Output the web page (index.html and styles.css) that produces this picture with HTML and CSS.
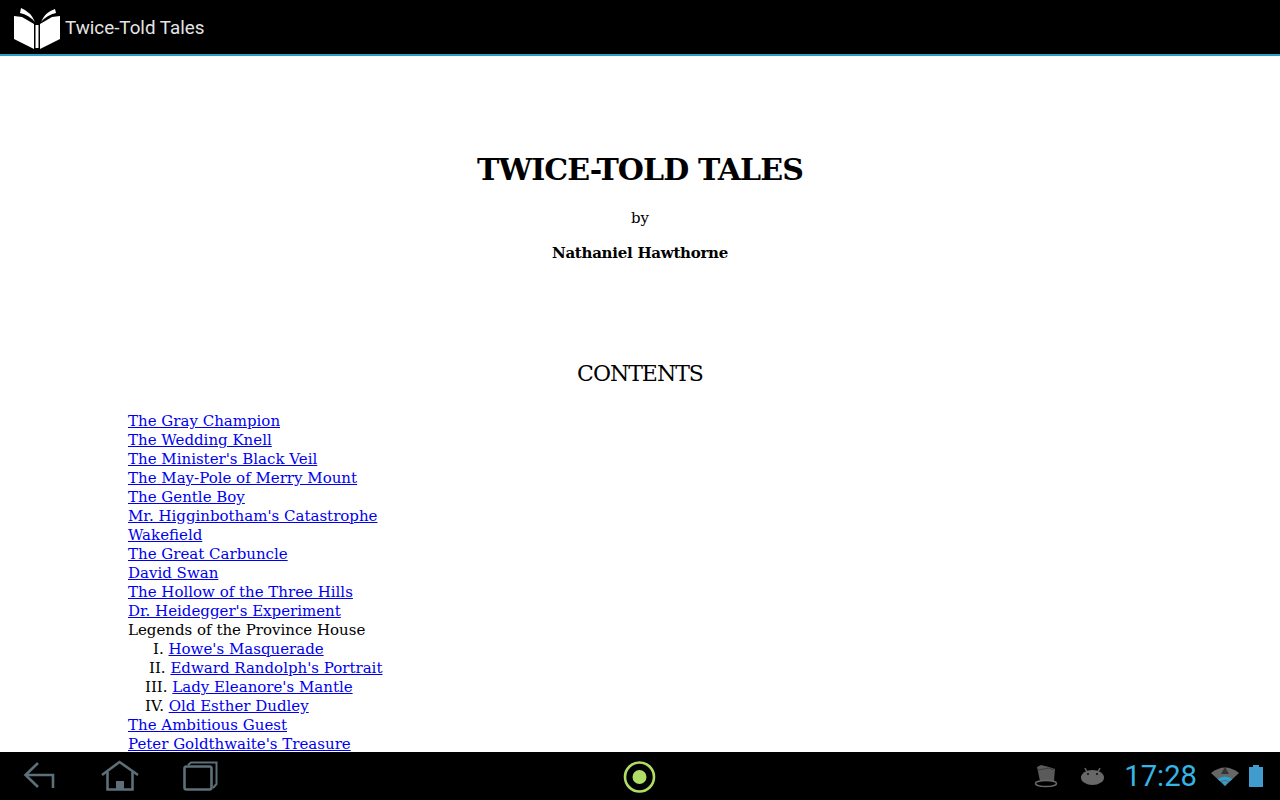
FILE: index.html
```html
<!DOCTYPE html>
<html lang="en">
<head>
    <meta charset="UTF-8">
    <meta name="viewport" content="width=device-width, initial-scale=1.0">
    <title>Twice-Told Tales</title>
    <link rel="stylesheet" href="styles.css">
</head>
<body>

    <div class="action-bar">
        <svg class="book-icon" width="46" height="46" viewBox="0 0 46 46" fill="#fff">
            <path d="M0 12 L8 13 L20 20 L20 45 L0 35 Z"/>
            <path d="M26 20 L38 13 L46 12 L46 35 L26 45 Z"/>
            <path d="M21.5 21 H24.5 V44 H21.5 Z"/>
            <path d="M7 4 Q17 8 21 18 Q15 11 6 9 Z"/>
            <path d="M41 5 Q31 8 27 18 Q33 11 42 9 Z"/>
        </svg>
        <span class="app-title">Twice-Told Tales</span>
    </div>

    <div class="book-page">
        <h1>TWICE-TOLD TALES</h1>
        <p class="by">by</p>
        <p class="author">Nathaniel Hawthorne</p>
        <h2>CONTENTS</h2>
        <div class="toc">
            <div><a href="#">The Gray Champion</a></div>
            <div><a href="#">The Wedding Knell</a></div>
            <div><a href="#">The Minister's Black Veil</a></div>
            <div><a href="#">The May-Pole of Merry Mount</a></div>
            <div><a href="#">The Gentle Boy</a></div>
            <div><a href="#">Mr. Higginbotham's Catastrophe</a></div>
            <div><a href="#">Wakefield</a></div>
            <div><a href="#">The Great Carbuncle</a></div>
            <div><a href="#">David Swan</a></div>
            <div><a href="#">The Hollow of the Three Hills</a></div>
            <div><a href="#">Dr. Heidegger's Experiment</a></div>
            <div>Legends of the Province House</div>
            <div class="sub-1">I. <a href="#">Howe's Masquerade</a></div>
            <div class="sub-2">II. <a href="#">Edward Randolph's Portrait</a></div>
            <div class="sub-3">III. <a href="#">Lady Eleanore's Mantle</a></div>
            <div class="sub-3">IV. <a href="#">Old Esther Dudley</a></div>
            <div><a href="#">The Ambitious Guest</a></div>
            <div><a href="#">Peter Goldthwaite's Treasure</a></div>
        </div>
    </div>

    <div class="nav-bar">
        <div class="nav-left">
            <svg width="34" height="28" viewBox="0 0 34 28" fill="none" stroke="#5d6f78" stroke-width="2.6">
                <path d="M15 1 L2.5 13 L15 25"/>
                <path d="M2.5 13 H30 V26"/>
            </svg>
            <svg width="40" height="32" viewBox="0 0 40 32" fill="none" stroke="#5d6f78" stroke-width="2.6">
                <path d="M2 15 L19.5 2 L38 15"/>
                <path d="M7.5 12 V29.5 H32.5 V12"/>
                <rect x="16" y="21" width="8" height="8" fill="#5d6f78" stroke="none"/>
            </svg>
            <svg width="35" height="30" viewBox="0 0 35 30" fill="none" stroke="#5d6f78" stroke-width="2.6">
                <rect x="1.5" y="5.5" width="27" height="23" rx="2"/>
                <path d="M5 4 L8 1.5 H33.5 V23 L30 27" stroke-width="2"/>
            </svg>
        </div>
        <div class="nav-center">
            <svg width="34" height="36" viewBox="0 0 34 36">
                <circle cx="16.5" cy="19" r="14.5" fill="none" stroke="#b0dd66" stroke-width="2.6"/>
                <circle cx="16.5" cy="19" r="7" fill="#b0dd66"/>
            </svg>
        </div>
        <div class="nav-right">
            <svg class="hat" width="24" height="24" viewBox="0 0 24 24">
                <path fill="#5a5a5a" d="M3 3 L7 1 L15 3 L21 5 L20 17 L6 17 Z"/>
                <path fill="none" stroke="#3c3c3c" d="M4 6 L15 4 L20 6"/>
                <ellipse cx="12" cy="19.5" rx="10.5" ry="3" fill="none" stroke="#6a6a6a" stroke-width="1.5"/>
            </svg>
            <svg class="droid" width="24" height="18" viewBox="0 0 24 18">
                <ellipse cx="11.5" cy="10.5" rx="11.5" ry="7.5" fill="#686868"/>
                <path d="M6 5 L4 1 M17 5 L19 1" stroke="#686868" stroke-width="1.5"/>
                <circle cx="7" cy="7" r="1.1" fill="#111"/>
                <circle cx="16" cy="7" r="1.1" fill="#111"/>
            </svg>
            <span class="clock">17:28</span>
            <svg class="wifi" width="28" height="20" viewBox="0 0 28 20">
                <path fill="#666" d="M0 7 Q14 -4 28 7 L14 20 Z"/>
                <path fill="#333" d="M14 1 L10 8 H18 Z"/>
                <path fill="#2f9fd0" d="M6.5 13 Q14 8 21.5 13 L18.5 15.5 Q14 12.5 9.5 15.5 Z"/>
                <path fill="#2f9fd0" d="M10.5 16 Q14 14 17.5 16 L14 20 Z"/>
            </svg>
            <svg class="battery" width="14" height="22" viewBox="0 0 14 22">
                <rect x="4" y="0" width="6" height="3" fill="#3f9ccc"/>
                <rect x="0" y="2" width="14" height="20" fill="#3f9ccc"/>
            </svg>
        </div>
    </div>

</body>
</html>
```

FILE: styles.css
```css
html, body {
    height: 100%;
}
body {
    margin: 0;
    display: flex;
    flex-direction: column;
    overflow: hidden;
    background: #fff;
    font-family: "DejaVu Serif", serif;
}
.action-bar {
    height: 54px;
    flex: none;
    display: flex;
    align-items: center;
    background: #000;
    border-bottom: 2px solid #2a9cc8;
    padding-left: 14px;
}
.book-icon {
    flex: none;
}
.app-title {
    margin: 2px 0 0 5px;
    font-family: Roboto, sans-serif;
    font-size: 18.8px;
    color: #e4e4e4;
}
.book-page {
    flex: 1;
    min-height: 0;
    overflow: hidden;
    padding: 0 128px;
    color: #000;
    font-size: 15px;
    line-height: 19px;
}
h1 {
    margin: 93px 0 0;
    text-align: center;
    font-size: 30px;
    letter-spacing: -0.9px;
    line-height: 42px;
}
.by {
    margin: 18px 0 0;
    text-align: center;
}
.author {
    margin: 16px 0 0;
    text-align: center;
    font-weight: bold;
    letter-spacing: -0.26px;
}
h2 {
    margin: 95px 0 0;
    text-align: center;
    font-size: 22px;
    letter-spacing: -1px;
    line-height: 32px;
    font-weight: normal;
}
.toc {
    margin-top: 22px;
}
.toc a {
    color: #00e;
}
.sub-1 {
    padding-left: 25px;
}
.sub-2 {
    padding-left: 21px;
}
.sub-3 {
    padding-left: 17px;
}
.nav-bar {
    height: 48px;
    flex: none;
    display: grid;
    grid-template-columns: 1fr auto 1fr;
    align-items: center;
    background: #000;
}
.nav-left {
    display: flex;
    align-items: center;
    gap: 43px;
    padding-left: 23px;
}
.nav-center {
    display: flex;
}
.nav-right {
    display: flex;
    align-items: center;
    justify-content: flex-end;
    padding-right: 17px;
}
.hat {
    margin-right: 23px;
}
.droid {
    margin-right: 19px;
}
.clock {
    margin-right: 14px;
    font-family: Roboto, sans-serif;
    font-size: 29.2px;
    color: #33b5e5;
}
.wifi {
    margin-right: 10px;
}
```
